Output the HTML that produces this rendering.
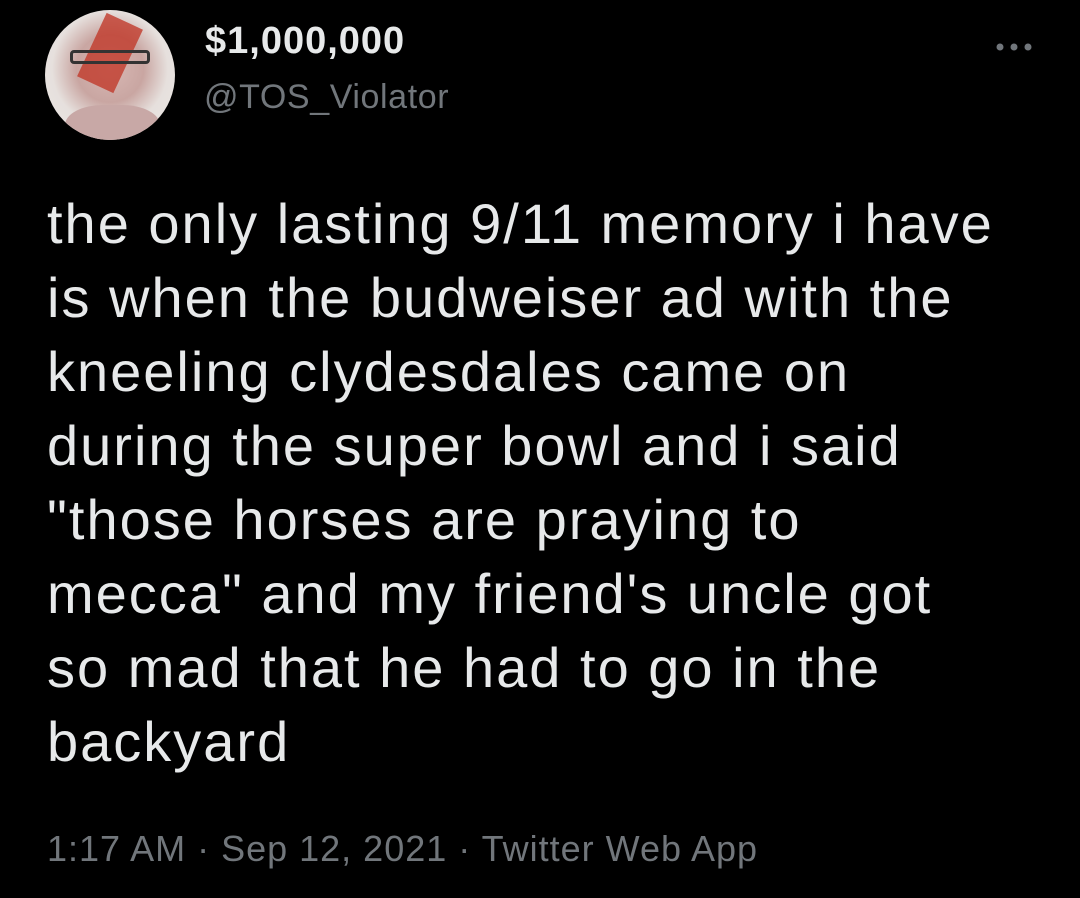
<!DOCTYPE html>
<html><head><style>
body{margin:0;width:1080px;height:898px;background:#000;overflow:hidden;font-family:"Liberation Sans",sans-serif;position:relative}
.av{position:absolute;left:45px;top:10px;width:130px;height:130px;border-radius:50%;background:radial-gradient(circle at 50% 45%,#d8b8b4 0%,#c9a6a2 35%,#e6e0dd 60%,#ece8e6 100%);overflow:hidden}
.name{position:absolute;left:205px;top:20px;color:#e7e9ea;font-weight:bold;font-size:38px;letter-spacing:1px}
.handle{position:absolute;left:204px;top:78px;color:#71767b;font-size:34px;letter-spacing:0.6px}
.txt{position:absolute;left:47px;top:187px;color:#e7e9ea;font-size:56px;line-height:74px;width:1030px;letter-spacing:2px;white-space:nowrap}
.ts{position:absolute;left:47px;top:828px;color:#71767b;font-size:36px;letter-spacing:1px}
</style></head><body>
<div class="av">
<div style="position:absolute;left:45px;top:8px;width:40px;height:70px;background:#c0392b;transform:rotate(25deg);opacity:.8"></div>
<div style="position:absolute;left:25px;top:40px;width:80px;height:14px;border:3px solid #333;border-radius:4px;box-sizing:border-box"></div>
<div style="position:absolute;left:20px;top:95px;width:95px;height:50px;background:#c8a8a6;border-radius:40%"></div>
</div>
<div class="name">$1,000,000</div>
<div class="handle">@TOS_Violator</div>
<svg style="position:absolute;left:995px;top:40px" width="40" height="14"><circle cx="5" cy="7" r="3.5" fill="#71767b"/><circle cx="19" cy="7" r="3.5" fill="#71767b"/><circle cx="33" cy="7" r="3.5" fill="#71767b"/></svg>
<div class="txt">the only lasting 9/11 memory i have<br>is when the budweiser ad with the<br>kneeling clydesdales came on<br>during the super bowl and i said<br>"those horses are praying to<br>mecca" and my friend's uncle got<br>so mad that he had to go in the<br>backyard</div>
<div class="ts">1:17 AM · Sep 12, 2021 · Twitter Web App</div>
</body></html>
